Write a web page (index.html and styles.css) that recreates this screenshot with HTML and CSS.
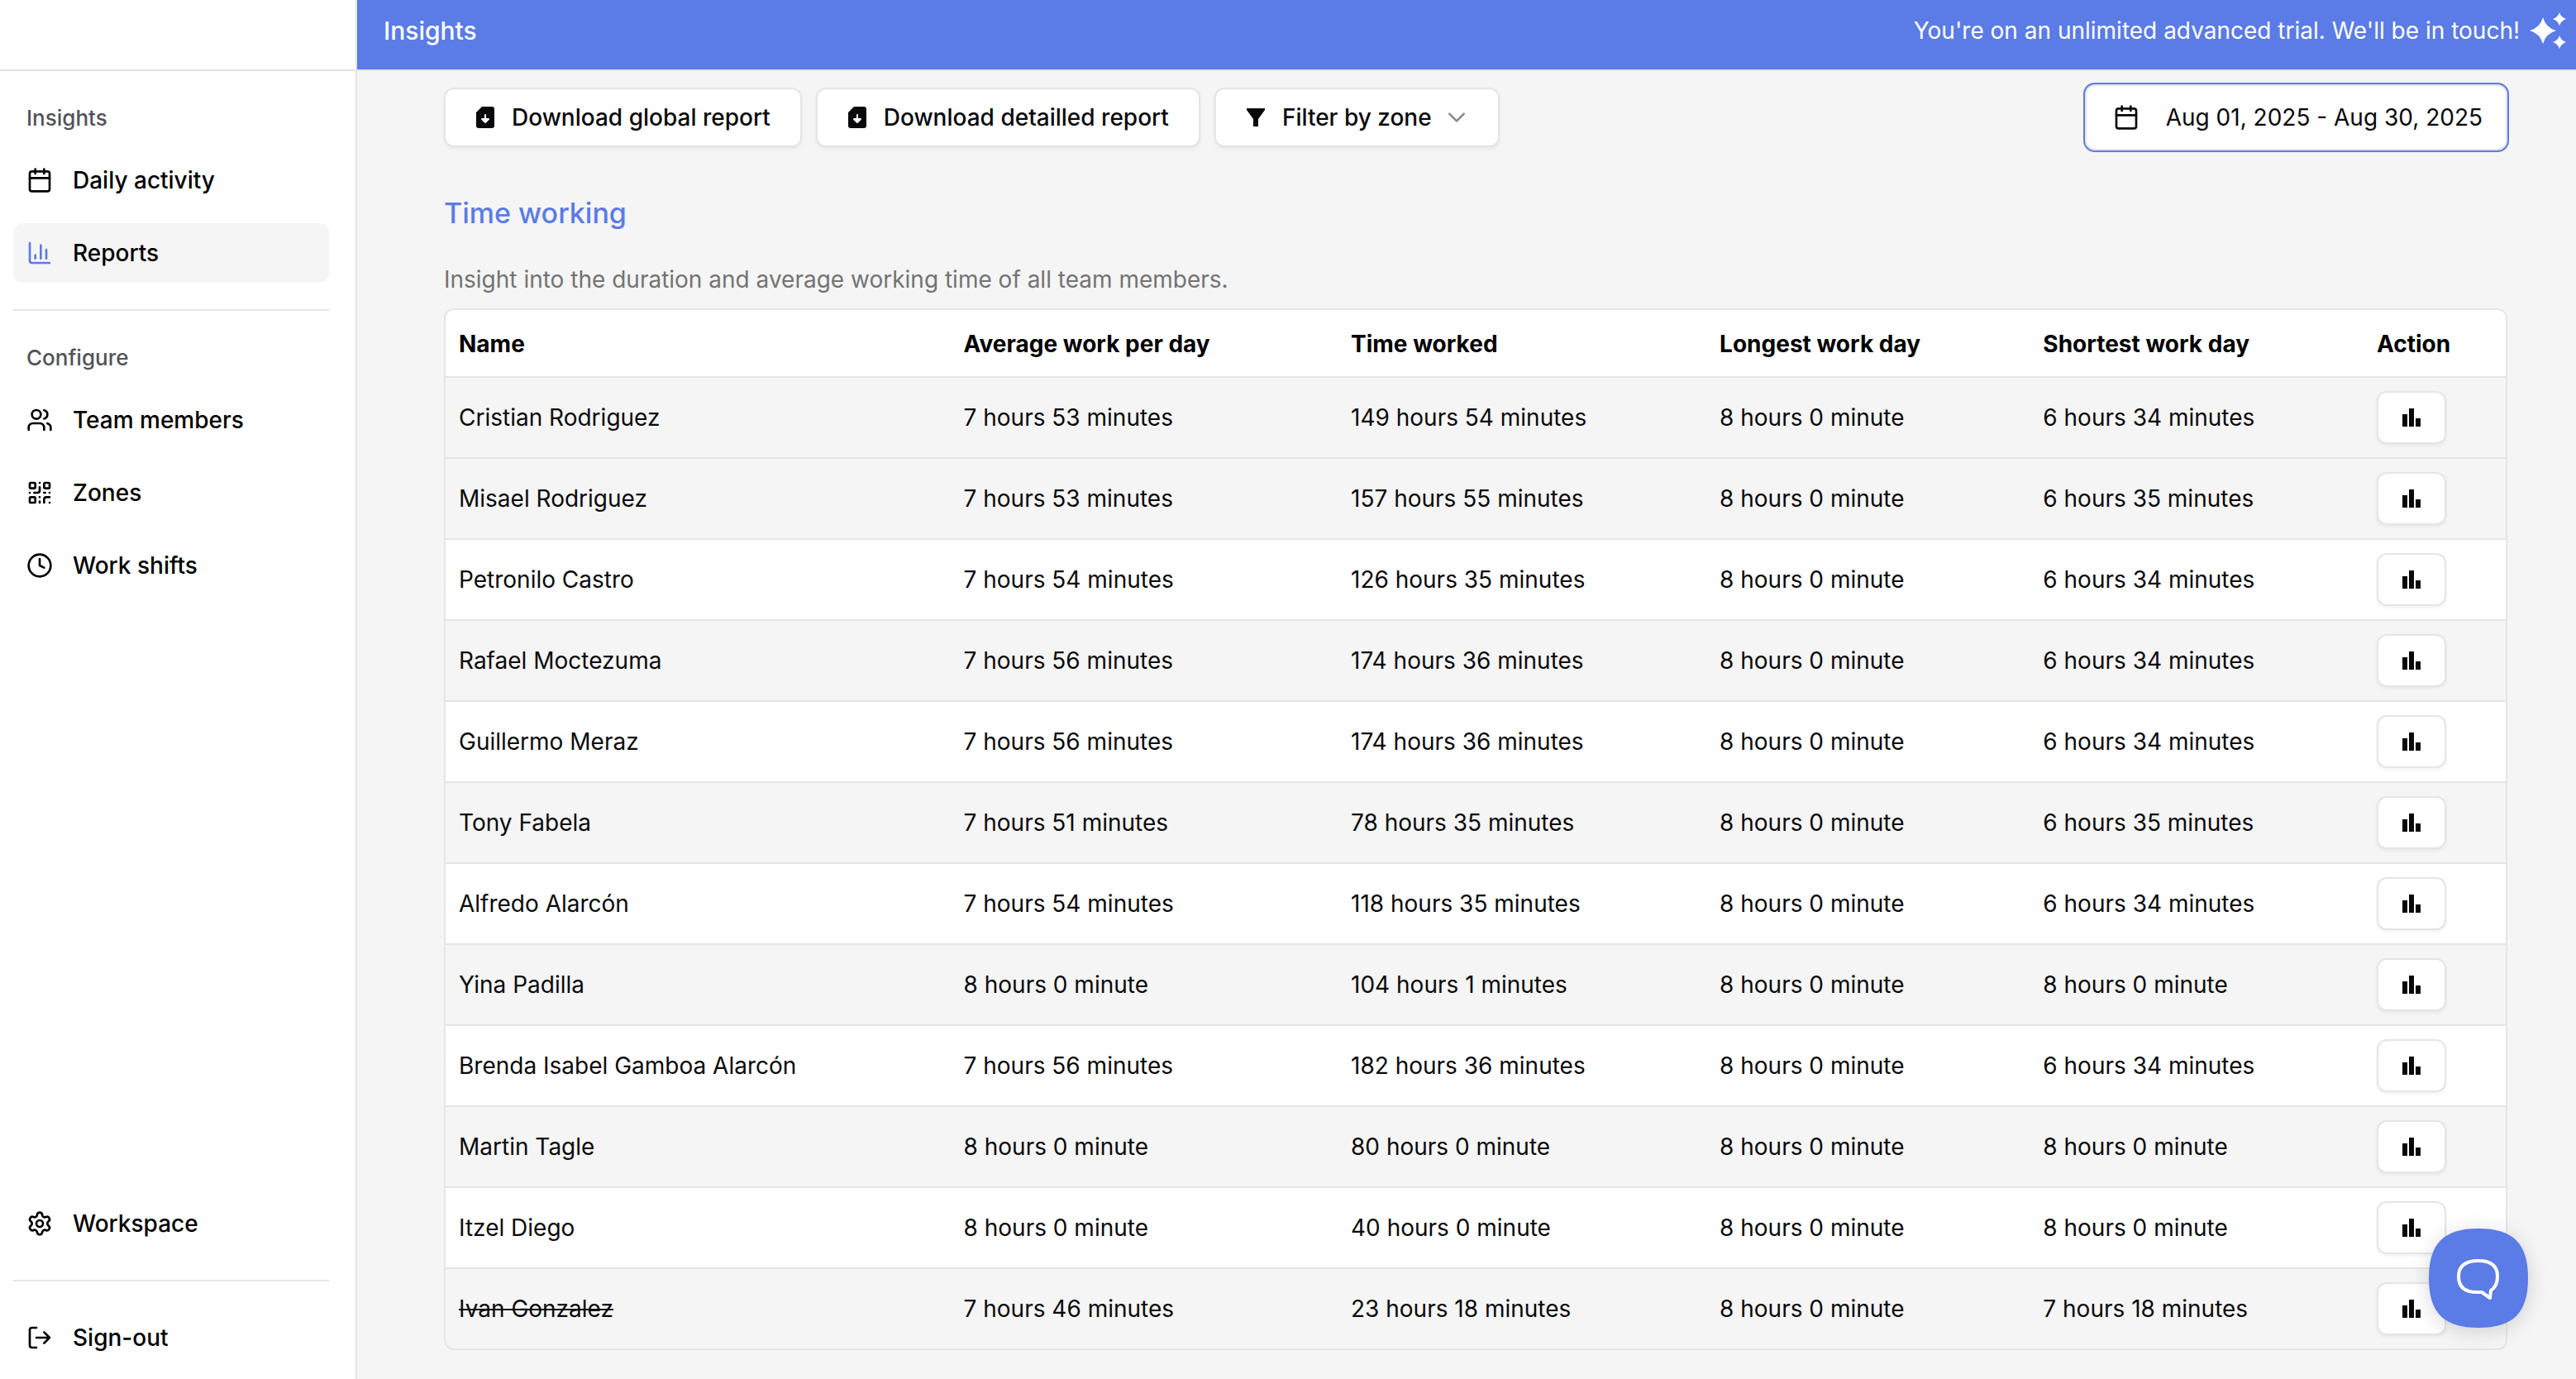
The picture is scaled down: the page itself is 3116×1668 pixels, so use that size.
FILE: index.html
```
<!DOCTYPE html>
<html lang="en">
<head>
    <meta charset="UTF-8">
    <meta name="viewport" content="width=device-width, initial-scale=1.0">
    <title>Insights</title>
    <link rel="stylesheet" href="styles.css">
</head>
<body>

    <svg class="sprite" aria-hidden="true">
        <symbol id="i-calendar" viewBox="0 0 24 24"><path d="M8 2v4M16 2v4M3 10h18"/><rect x="3" y="4" width="18" height="18" rx="2"/></symbol>
        <symbol id="i-chart" viewBox="0 0 24 24"><path d="M3 3v16a2 2 0 0 0 2 2h16M18 17V9M13 17V5M8 17v-3"/></symbol>
        <symbol id="i-users" viewBox="0 0 24 24"><path d="M16 21v-2a4 4 0 0 0-4-4H6a4 4 0 0 0-4 4v2M22 21v-2a4 4 0 0 0-3-3.87M16 3.13a4 4 0 0 1 0 7.75"/><circle cx="9" cy="7" r="4"/></symbol>
        <symbol id="i-qr" viewBox="0 0 24 24"><rect x="3" y="3" width="5" height="5" rx="1"/><rect x="16" y="3" width="5" height="5" rx="1"/><rect x="3" y="16" width="5" height="5" rx="1"/><path d="M21 16h-3a2 2 0 0 0-2 2v3M21 21v.01M12 7v3a2 2 0 0 1-2 2H7M3 12h.01M12 3h.01M12 16v.01M16 12h1M21 12v.01M12 21v-1"/></symbol>
        <symbol id="i-clock" viewBox="0 0 24 24"><circle cx="12" cy="12" r="10"/><path d="M12 6v6l4 2"/></symbol>
        <symbol id="i-gear" viewBox="0 0 24 24"><path d="M9.671 4.136a2.34 2.34 0 0 1 4.659 0 2.34 2.34 0 0 0 3.319 1.915 2.34 2.34 0 0 1 2.33 4.033 2.34 2.34 0 0 0 0 3.831 2.34 2.34 0 0 1-2.33 4.033 2.34 2.34 0 0 0-3.319 1.915 2.34 2.34 0 0 1-4.659 0 2.34 2.34 0 0 0-3.32-1.915 2.34 2.34 0 0 1-2.33-4.033 2.34 2.34 0 0 0 0-3.831A2.34 2.34 0 0 1 6.35 6.051a2.34 2.34 0 0 0 3.319-1.915"/><circle cx="12" cy="12" r="3"/></symbol>
        <symbol id="i-out" viewBox="0 0 24 24"><path d="M9 21H5a2 2 0 0 1-2-2V5a2 2 0 0 1 2-2h4M16 17l5-5-5-5M21 12H9"/></symbol>
        <symbol id="i-bars" viewBox="0 0 32 32"><path d="M5 12h6v15H5zM13 5h6v22h-6zM21 17h6v10h-6z"/></symbol>
    </svg>

    <div class="app">
        <aside class="sidebar">
            <div class="logo"></div>
            <nav class="nav">
                <div class="group first">
                    <h2 class="label">Insights</h2>
                    <a class="item" href="#"><svg class="icon"><use href="#i-calendar"/></svg>Daily activity</a>
                    <a class="item active" href="#"><svg class="icon"><use href="#i-chart"/></svg>Reports</a>
                </div>
                <div class="group">
                    <h2 class="label">Configure</h2>
                    <a class="item" href="#"><svg class="icon"><use href="#i-users"/></svg>Team members</a>
                    <a class="item" href="#"><svg class="icon"><use href="#i-qr"/></svg>Zones</a>
                    <a class="item" href="#"><svg class="icon"><use href="#i-clock"/></svg>Work shifts</a>
                </div>
                <div class="bottom">
                    <a class="item" href="#"><svg class="icon"><use href="#i-gear"/></svg>Workspace</a>
                    <hr class="divider">
                    <a class="item" href="#"><svg class="icon"><use href="#i-out"/></svg>Sign-out</a>
                </div>
            </nav>
        </aside>

        <div class="page">
            <header class="topbar">
                <h1 class="title">Insights</h1>
                <p class="trial">You're on an unlimited advanced trial. We'll be in touch!
                    <svg class="sparkles" viewBox="0 0 44 44"><path d="M16 6Q19.500 18.500 32 22Q19.500 25.500 16 38Q12.500 25.500 0 22Q12.500 18.500 16 6zM36 0Q38 6 44 8Q38 10 36 16Q34 10 28 8Q34 6 36 0zM36 28Q38 34 44 36Q38 38 36 44Q34 38 28 36Q34 34 36 28z"/></svg>
                </p>
            </header>

            <main class="content">
                <div class="toolbar">
                    <button class="btn" type="button"><svg class="icon solid" viewBox="0 0 32 32"><path d="M12 3h12a3 3 0 0 1 3 3v20a3 3 0 0 1-3 3H8a3 3 0 0 1-3-3V10z"/><path class="cut" d="M16 13v9M12 18l4 4 4-4z"/></svg>Download global report</button>
                    <button class="btn" type="button"><svg class="icon solid" viewBox="0 0 32 32"><path d="M12 3h12a3 3 0 0 1 3 3v20a3 3 0 0 1-3 3H8a3 3 0 0 1-3-3V10z"/><path class="cut" d="M16 13v9M12 18l4 4 4-4z"/></svg>Download detailled report</button>
                    <button class="btn" type="button"><svg class="icon solid" viewBox="0 0 32 32"><path d="M5 5h22v2l-8 11v9h-6v-9L5 7z"/></svg>Filter by zone<svg class="icon chevron" viewBox="0 0 32 32"><path d="M6 11l10 10 10-10"/></svg></button>
                    <button class="btn date" type="button"><svg class="icon"><use href="#i-calendar"/></svg>Aug 01, 2025 - Aug 30, 2025</button>
                </div>

                <h2 class="heading">Time working</h2>
                <p class="hint">Insight into the duration and average working time of all team members.</p>

                <div class="table-box">
                    <table class="report">
                        <thead>
                            <tr>
                                <th class="c-name">Name</th>
                                <th class="c-avg">Average work per day</th>
                                <th class="c-time">Time worked</th>
                                <th class="c-long">Longest work day</th>
                                <th class="c-short">Shortest work day</th>
                                <th>Action</th>
                            </tr>
                        </thead>
                        <tbody id="rows"></tbody>
                    </table>
                </div>
            </main>
        </div>
    </div>

    <button class="chat" type="button" aria-label="Open chat">
        <svg viewBox="0 0 120 120"><path class="blob" d="M60 0C102 0 120 18 120 60S102 120 60 120 0 102 0 60 18 0 60 0z"/><path class="bubble" d="M60 39C76 39 83 46 83 58C83 66 81 71 75 75L74 84L64 77H58C43 77 36 70 36 58C36 46 43 39 60 39z"/></svg>
    </button>

    <script>
        const rows = [
            ["Cristian Rodriguez", "7 hours 53 minutes", "149 hours 54 minutes", "8 hours 0 minute", "6 hours 34 minutes", "current"],
            ["Misael Rodriguez", "7 hours 53 minutes", "157 hours 55 minutes", "8 hours 0 minute", "6 hours 35 minutes"],
            ["Petronilo Castro", "7 hours 54 minutes", "126 hours 35 minutes", "8 hours 0 minute", "6 hours 34 minutes"],
            ["Rafael Moctezuma", "7 hours 56 minutes", "174 hours 36 minutes", "8 hours 0 minute", "6 hours 34 minutes"],
            ["Guillermo Meraz", "7 hours 56 minutes", "174 hours 36 minutes", "8 hours 0 minute", "6 hours 34 minutes"],
            ["Tony Fabela", "7 hours 51 minutes", "78 hours 35 minutes", "8 hours 0 minute", "6 hours 35 minutes"],
            ["Alfredo Alarcón", "7 hours 54 minutes", "118 hours 35 minutes", "8 hours 0 minute", "6 hours 34 minutes"],
            ["Yina Padilla", "8 hours 0 minute", "104 hours 1 minutes", "8 hours 0 minute", "8 hours 0 minute"],
            ["Brenda Isabel Gamboa Alarcón", "7 hours 56 minutes", "182 hours 36 minutes", "8 hours 0 minute", "6 hours 34 minutes"],
            ["Martin Tagle", "8 hours 0 minute", "80 hours 0 minute", "8 hours 0 minute", "8 hours 0 minute"],
            ["Itzel Diego", "8 hours 0 minute", "40 hours 0 minute", "8 hours 0 minute", "8 hours 0 minute"],
            ["Ivan Gonzalez", "7 hours 46 minutes", "23 hours 18 minutes", "8 hours 0 minute", "7 hours 18 minutes", "removed"]
        ];

        document.getElementById("rows").innerHTML = rows.map(([name, avg, time, longest, shortest, state]) => `
            <tr class="${state || ""}">
                <td><span class="name">${name}</span></td>
                <td>${avg}</td>
                <td>${time}</td>
                <td>${longest}</td>
                <td>${shortest}</td>
                <td><button class="btn small" type="button" aria-label="Show report"><svg class="icon solid"><use href="#i-bars"/></svg></button></td>
            </tr>`).join("");
    </script>

</body>
</html>
```

FILE: styles.css
```
* { box-sizing: border-box; margin: 0; padding: 0; }
body { font-family: Inter, "Liberation Sans", sans-serif; font-optical-sizing: none; font-size: 28px; line-height: 40px; color: #09090b; background: #f5f5f5; }
h1, h2 { font-weight: 500; }
button { font: inherit; color: inherit; cursor: pointer; }

.sprite { display: none; }
.icon { width: 32px; height: 32px; flex: none; fill: none; stroke: currentColor; stroke-width: 2; stroke-linecap: round; stroke-linejoin: round; }
.solid { fill: currentColor; stroke: none; }

.app { display: flex; min-height: 100vh; }

/* Sidebar */
.sidebar { display: flex; flex-direction: column; width: 432px; flex: none; background: #fff; border-right: 2px solid #e5e5e5; }
.logo { height: 86px; border-bottom: 2px solid #e5e5e5; }
.nav { flex: 1; display: flex; flex-direction: column; padding: 0 32px 14px 16px; }
.group { display: flex; flex-direction: column; gap: 16px; padding: 34px 0 32px; border-top: 2px solid #e5e5e5; }
.group.first { border-top: 0; }
.label { padding: 0 16px; font-size: 26px; line-height: 46px; color: #52525b; }
.item { display: flex; align-items: center; gap: 24px; height: 72px; padding: 0 16px; border-radius: 12px; color: #000; font-weight: 500; text-decoration: none; }
.item.active { background: #f5f5f5; }
.item.active .icon { color: #5b7be6; }
.bottom { margin-top: auto; }
.divider { margin: 32px 0; border: 0; border-top: 2px solid #e5e5e5; }

/* Top bar */
.page { flex: 1; min-width: 0; }
.topbar { display: flex; align-items: center; justify-content: space-between; height: 86px; padding: 0 12px 10px 32px; background: #5b7be6; border-bottom: 2px solid #e2e5ee; color: #fff; }
.title { font-size: 30px; }
.trial { display: flex; align-items: center; gap: 12px; }
.sparkles { width: 44px; height: 44px; fill: #fff; }

/* Report */
.content { padding: 16px 83px 32px 105px; }
.toolbar { display: flex; align-items: center; gap: 17px; }
.btn { display: flex; align-items: center; gap: 16px; height: 72px; padding: 0 36px 0 32px; background: #fff; border: 2px solid #e5e5e5; border-radius: 12px; box-shadow: 0 2px 4px rgba(0, 0, 0, 0.06); font-weight: 500; }
.cut { fill: #fff; stroke: #fff; stroke-width: 2; }
.chevron { width: 28px; height: 28px; color: #888; stroke-width: 3; }
.date { gap: 32px; height: 80px; margin-left: auto; padding: 0 28px 0 32px; font-weight: 400; box-shadow: 0 0 0 2px #5b7be6; }
.heading { margin-top: 56px; font-size: 34px; color: #5b7be6; }
.hint { margin: 40px 0 15px; color: #737373; }
.table-box { border: 2px solid #e5e5e5; border-radius: 12px; overflow: hidden; }
.report { width: 100%; table-layout: fixed; border-collapse: separate; border-spacing: 0; text-align: left; }
.report th { height: 82px; padding: 2px 16px 0; background: #fff; font-weight: 700; color: #000; border-bottom: 2px solid #e5e5e5; }
.report td { padding: 16px; border-bottom: 2px solid #e5e5e5; }
.report tr:nth-child(odd) td { background: #fff; }
.report tr:last-child td { border-bottom: 0; }
.report tr.current td { background: #f5f5f5; }
.removed .name { text-decoration: line-through; }
.c-name { width: 24.5%; }
.c-avg { width: 18.8%; }
.c-time { width: 17.9%; }
.c-long { width: 15.7%; }
.c-short { width: 16.2%; }
.small { justify-content: center; width: 84px; height: 64px; padding: 0; }

/* Chat launcher */
.chat { position: fixed; right: 58px; bottom: 62px; width: 120px; height: 120px; background: none; border: 0; filter: drop-shadow(0 4px 12px rgba(0, 0, 0, 0.15)); }
.blob { fill: #5b7be6; }
.bubble { fill: none; stroke: #fff; stroke-width: 4; stroke-linejoin: round; }
```
